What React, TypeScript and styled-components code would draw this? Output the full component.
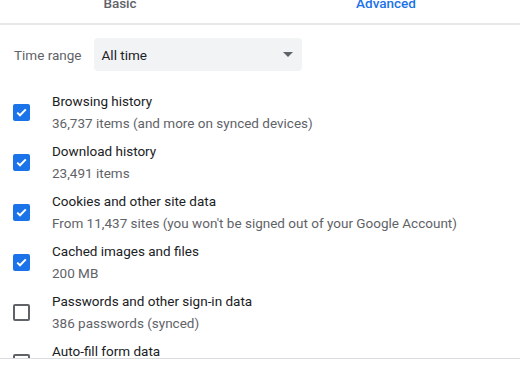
import React from 'react';
import styled, { createGlobalStyle } from 'styled-components';

const GlobalStyle = createGlobalStyle`
  body {
    margin: 0;
    background: #fff;
    font-family: Roboto, "Liberation Sans", Arial, sans-serif;
    overflow: hidden;
  }
`;

const Page = styled.div`
  width: 520px;
  height: 375px;
  display: flex;
  flex-direction: column;
  overflow: hidden;
`;

const Tabs = styled.div`
  display: flex;
  height: 23px;
  border-bottom: 2px solid #e8e8e8;
  flex-shrink: 0;
  overflow: hidden;
`;

const Tab = styled.div<{ active?: boolean }>`
  flex: none;
  width: 266px;
  text-align: center;
  font-size: 13.5px;
  font-weight: 500;
  line-height: 20px;
  margin-top: -7px;
  color: ${(p) => (p.active ? '#1a73e8' : '#5f6368')};
  &:first-child {
    margin-left: -13px;
  }
`;

const Content = styled.div`
  height: 333px;
  overflow: hidden;
  padding: 13px 0 0 0;
  box-sizing: border-box;
`;

const RangeRow = styled.div`
  display: flex;
  align-items: center;
  padding-left: 14px;
  gap: 12px;
  margin-bottom: 16px;
`;

const Label = styled.span`
  font-size: 13.5px;
  color: #5f6368;
`;

const Select = styled.div`
  width: 208px;
  height: 33px;
  background: #f1f3f4;
  border-radius: 4px;
  display: flex;
  align-items: center;
  justify-content: space-between;
  padding: 0 9px 0 8px;
  box-sizing: border-box;
  font-size: 13.5px;
  color: #202124;
`;

const Arrow = styled.span`
  width: 0;
  height: 0;
  border-left: 5px solid transparent;
  border-right: 5px solid transparent;
  border-top: 5px solid #5f6368;
`;

const Row = styled.div`
  display: flex;
  align-items: center;
  height: 50px;
  padding-left: 13px;
`;

const Box = styled.div<{ checked?: boolean }>`
  width: 17px;
  height: 17px;
  box-sizing: border-box;
  border-radius: 2px;
  flex-shrink: 0;
  display: flex;
  align-items: center;
  justify-content: center;
  background: ${(p) => (p.checked ? '#1a73e8' : 'transparent')};
  border: ${(p) => (p.checked ? 'none' : '2px solid #5f6368')};
`;

const Texts = styled.div`
  margin-left: 22px;
  display: flex;
  flex-direction: column;
`;

const Title = styled.div`
  font-size: 13.5px;
  line-height: 22px;
  color: #202124;
`;

const Sub = styled.div`
  font-size: 13.5px;
  line-height: 22px;
  color: #5f6368;
`;

const Footer = styled.div`
  flex: 1;
  border-top: 1px solid #dadce0;
`;

type Item = { title: string; sub: string; checked: boolean };

const items: Item[] = [
  { title: 'Browsing history', sub: '36,737 items (and more on synced devices)', checked: true },
  { title: 'Download history', sub: '23,491 items', checked: true },
  { title: 'Cookies and other site data', sub: "From 11,437 sites (you won't be signed out of your Google Account)", checked: true },
  { title: 'Cached images and files', sub: '200 MB', checked: true },
  { title: 'Passwords and other sign-in data', sub: '386 passwords (synced)', checked: false },
  { title: 'Auto-fill form data', sub: '', checked: false },
];

export default function App() {
  return (
    <Page>
      <GlobalStyle />
      <Tabs>
        <Tab>Basic</Tab>
        <Tab active>Advanced</Tab>
      </Tabs>
      <Content>
        <RangeRow>
          <Label>Time range</Label>
          <Select>
            All time
            <Arrow />
          </Select>
        </RangeRow>
        {items.map((item) => (
          <Row key={item.title}>
            <Box checked={item.checked}>
              {item.checked && (
                <svg width="11" height="9" viewBox="0 0 11 9">
                  <path d="M1.2 4.6 L4 7.3 L9.8 1.4" fill="none" stroke="#fff" strokeWidth="2" />
                </svg>
              )}
            </Box>
            <Texts>
              <Title>{item.title}</Title>
              <Sub>{item.sub || '\u00a0'}</Sub>
            </Texts>
          </Row>
        ))}
      </Content>
      <Footer />
    </Page>
  );
}
